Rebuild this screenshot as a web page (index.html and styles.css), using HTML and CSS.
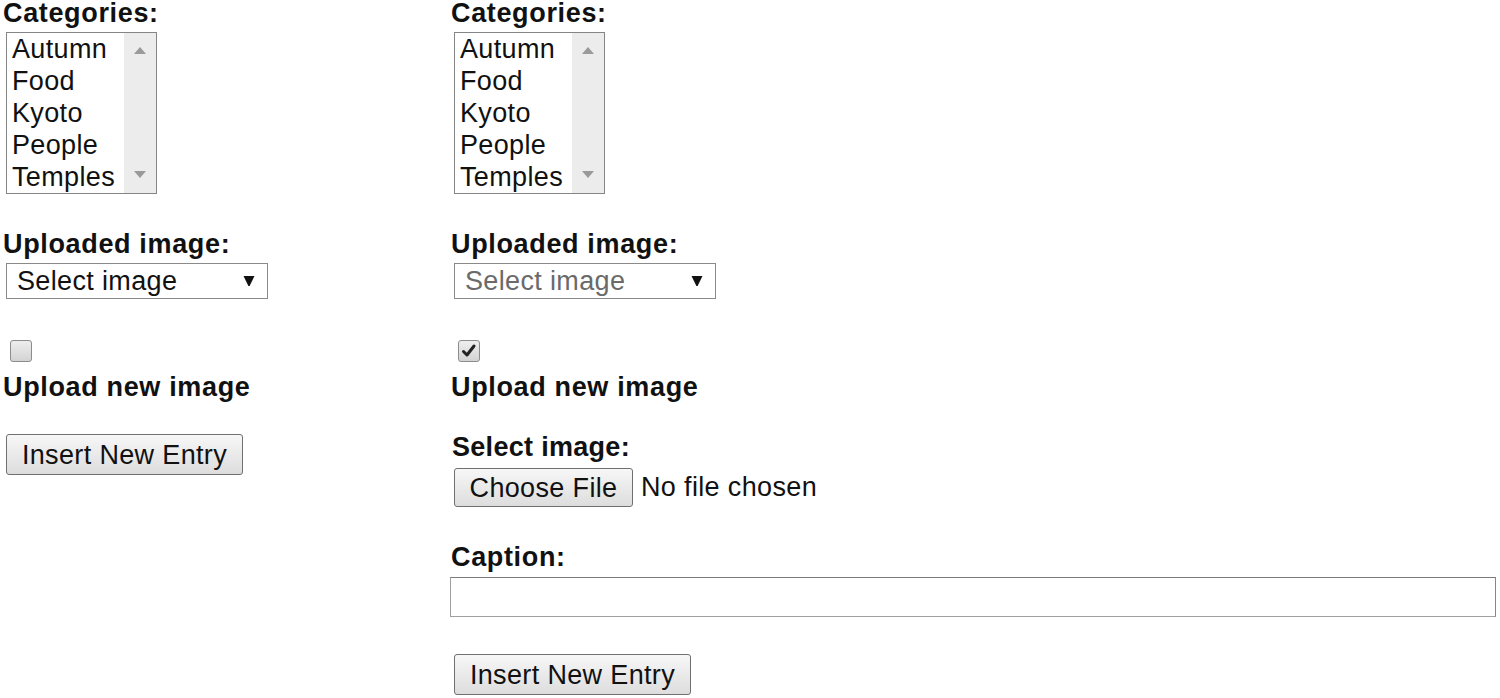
FILE: index.html
```html
<!DOCTYPE html>
<html lang="en">
<head>
<meta charset="utf-8">
<title>Insert New Entry</title>
<link rel="stylesheet" href="styles.css">
</head>
<body>
<div class="page">
  <form class="col col-left">
    <label class="lbl">Categories:</label>
    <div class="listbox">
      <ul class="options">
        <li>Autumn</li>
        <li>Food</li>
        <li>Kyoto</li>
        <li>People</li>
        <li>Temples</li>
      </ul>
      <div class="scrollbar">
        <svg class="sarrow" width="12" height="7" viewBox="0 0 12 7"><polygon points="0,7 12,7 6,0" /></svg>
        <svg class="sarrow" width="12" height="7" viewBox="0 0 12 7"><polygon points="0,0 12,0 6,7" /></svg>
      </div>
    </div>
    <label class="lbl lbl-gap">Uploaded image:</label>
    <div class="select">
      <span>Select image</span>
      <svg class="darrow" width="12" height="12" viewBox="0 0 12 12"><path d="M0.5 1 H11.5 L6.6 11 H5.4 Z" /></svg>
    </div>
    <span class="checkbox"></span>
    <label class="lbl lbl-check">Upload new image</label>
    <button type="button" class="btn btn-left">Insert New Entry</button>
  </form>

  <form class="col col-right">
    <label class="lbl">Categories:</label>
    <div class="listbox">
      <ul class="options">
        <li>Autumn</li>
        <li>Food</li>
        <li>Kyoto</li>
        <li>People</li>
        <li>Temples</li>
      </ul>
      <div class="scrollbar">
        <svg class="sarrow" width="12" height="7" viewBox="0 0 12 7"><polygon points="0,7 12,7 6,0" /></svg>
        <svg class="sarrow" width="12" height="7" viewBox="0 0 12 7"><polygon points="0,0 12,0 6,7" /></svg>
      </div>
    </div>
    <label class="lbl lbl-gap">Uploaded image:</label>
    <div class="select select-disabled">
      <span>Select image</span>
      <svg class="darrow" width="12" height="12" viewBox="0 0 12 12"><path d="M0.5 1 H11.5 L6.6 11 H5.4 Z" /></svg>
    </div>
    <span class="checkbox checked">
      <svg width="20" height="20" viewBox="0 0 20 20"><path d="M4.5 10.5 L8 14 L15 5" /></svg>
    </span>
    <label class="lbl lbl-check">Upload new image</label>
    <label class="lbl lbl-select">Select image:</label>
    <div class="file-row">
      <button type="button" class="btn btn-file">Choose File</button>
      <span class="file-status">No file chosen</span>
    </div>
    <label class="lbl lbl-caption">Caption:</label>
    <input type="text" class="text-input">
    <button type="button" class="btn btn-right">Insert New Entry</button>
  </form>
</div>
</body>
</html>
```

FILE: styles.css
```css
* {
  box-sizing: border-box;
}

html, body {
  margin: 0;
  padding: 0;
  background: #ffffff;
}

body {
  font-family: "Liberation Sans", Arial, sans-serif;
  color: #111111;
  font-size: 27px;
  letter-spacing: 0.35px;
}

.page {
  display: flex;
  padding-left: 3px;
}

.col {
  display: flex;
  flex-direction: column;
  align-items: flex-start;
  margin: 0;
}

.col-left {
  width: 448px;
}

.col-right {
  flex: 1;
}

.lbl {
  display: block;
  font-weight: bold;
  font-size: 27px;
  line-height: 26px;
  height: 26px;
  letter-spacing: 0.65px;
  white-space: nowrap;
}

.lbl-gap {
  margin-top: 37px;
}

.lbl-check {
  margin-top: 12px;
}

.lbl-select {
  margin-top: 34px;
  letter-spacing: 0.3px;
  margin-left: 1px;
}

.lbl-caption {
  margin-top: 37px;
}

/* listbox */
.listbox {
  margin-top: 6px;
  margin-left: 3px;
  width: 151px;
  height: 162px;
  border: 1px solid #858585;
  display: flex;
  background: #ffffff;
}

.options {
  list-style: none;
  margin: 0;
  padding: 0 0 0 5px;
  flex: 1;
  font-size: 27px;
  line-height: 32px;
  white-space: nowrap;
  overflow: hidden;
}

.scrollbar {
  width: 32px;
  background: #ececec;
  display: flex;
  flex-direction: column;
  justify-content: space-between;
  align-items: center;
  padding: 14px 0 15px;
}

.sarrow {
  display: block;
  fill: #9a9a9a;
}

/* select */
.select {
  margin-top: 6px;
  margin-left: 3px;
  width: 262px;
  height: 36px;
  border: 1px solid #8a8a8a;
  display: flex;
  align-items: center;
  justify-content: space-between;
  padding: 0 12px 0 10px;
  font-size: 27px;
  line-height: 30px;
  background: #ffffff;
}

.select-disabled span {
  color: #6a6a6a;
}

.darrow {
  display: block;
  fill: #111111;
}

/* checkbox */
.checkbox {
  display: flex;
  align-items: center;
  justify-content: center;
  margin-top: 41px;
  margin-left: 7px;
  width: 22px;
  height: 22px;
  border: 1px solid #8c8c8c;
  border-radius: 3px;
  background: linear-gradient(#eeeeee, #d3d3d3);
}

.checkbox svg {
  display: block;
  fill: none;
  stroke: #222222;
  stroke-width: 3;
  stroke-linecap: round;
  stroke-linejoin: round;
}

/* buttons */
.btn {
  font-family: "Liberation Sans", Arial, sans-serif;
  font-size: 27px;
  letter-spacing: 0.35px;
  color: #111111;
  line-height: 30px;
  padding: 0;
  margin-left: 3px;
  text-align: center;
  border: 1px solid #707070;
  border-radius: 3px;
  background: linear-gradient(#f7f7f7, #dddddd);
  white-space: nowrap;
}

.btn-left,
.btn-right {
  width: 237px;
  height: 41px;
}

.btn-left {
  margin-top: 34px;
}

.btn-right {
  margin-top: 37px;
}

/* file row */
.file-row {
  display: flex;
  align-items: center;
  margin-top: 8px;
}

.btn-file {
  width: 179px;
  height: 39px;
}

.file-status {
  margin-left: 8px;
  font-size: 27px;
  white-space: nowrap;
}

/* text input */
.text-input {
  display: block;
  margin-top: 7px;
  margin-left: -1px;
  width: 1046px;
  height: 40px;
  border: 1px solid #a0a0a0;
  border-top-color: #7a7a7a;
  border-right-color: #858585;
  background: #ffffff;
  font-family: "Liberation Sans", Arial, sans-serif;
  font-size: 27px;
  padding: 0 4px;
  outline: none;
}
```
